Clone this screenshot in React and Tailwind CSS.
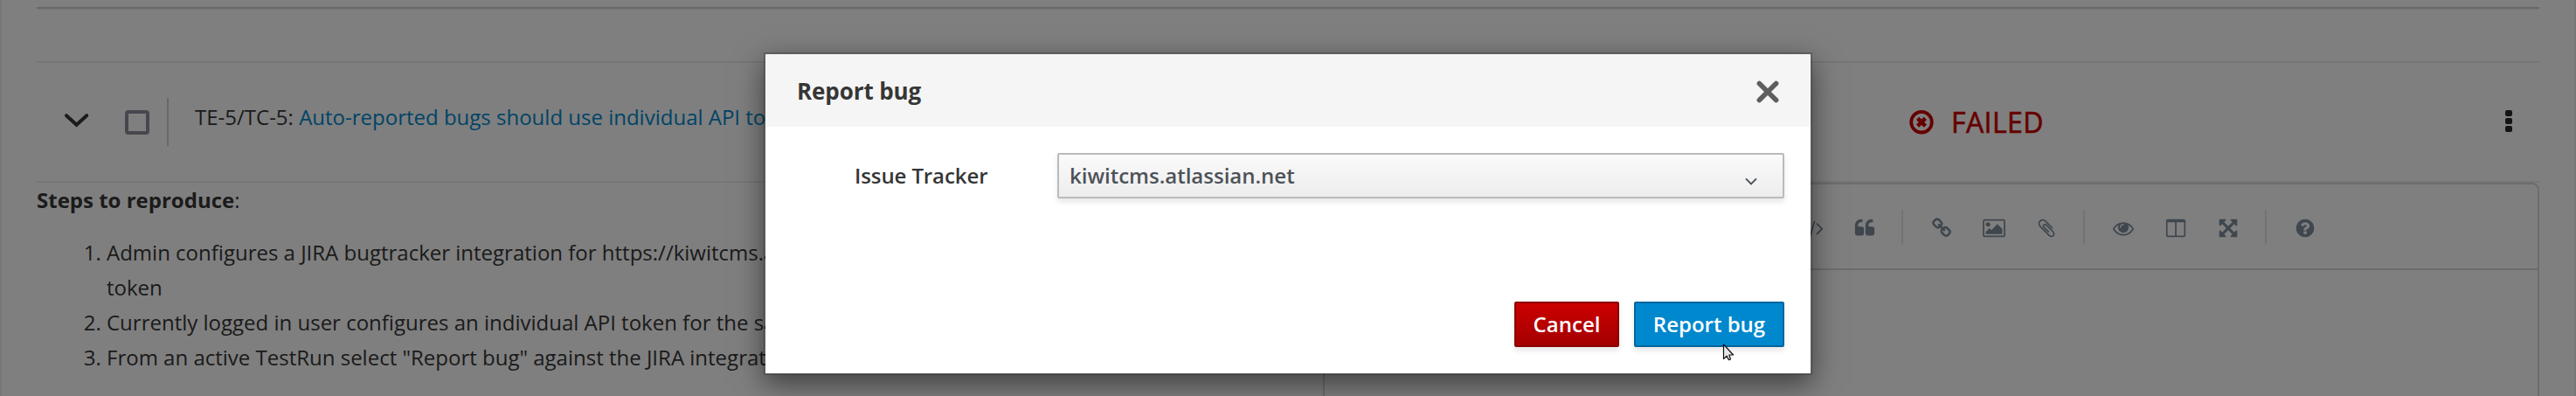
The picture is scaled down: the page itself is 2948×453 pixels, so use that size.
import React from 'react';

const GLYPHS = {
  code: 'M617 1399l-50 50q-10 10-23 10t-23-10l-466-466q-10-10-10-23t10-23l466-466q10-10 23-10t23 10l50 50q10 10 10 23t-10 23l-393 393 393 393q10 10 10 23t-10 23zm591-1067l-373 1291q-4 13-15.5 19.5t-23.5 2.5l-62-17q-13-4-19.5-15.5t-2.5-24.5l373-1291q4-13 15.5-19.5t23.5-2.5l62 17q13 4 19.5 15.5t2.5 24.5zm657 651l-466 466q-10 10-23 10t-23-10l-50-50q-10-10-10-23t10-23l393-393-393-393q-10-10-10-23t10-23l50-50q10-10 23-10t23 10l466 466q10 10 10 23t-10 23z',
  quote:
    'M832 960v384q0 80-56 136t-136 56h-384q-80 0-136-56t-56-136v-704q0-104 40.5-198.5t109.5-163.5 163.5-109.5 198.5-40.5h64q26 0 45 19t19 45v128q0 26-19 45t-45 19h-64q-106 0-181 75t-75 181v32q0 40 28 68t68 28h224q80 0 136 56t56 136zm896 0v384q0 80-56 136t-136 56h-384q-80 0-136-56t-56-136v-704q0-104 40.5-198.5t109.5-163.5 163.5-109.5 198.5-40.5h64q26 0 45 19t19 45v128q0 26-19 45t-45 19h-64q-106 0-181 75t-75 181v32q0 40 28 68t68 28h224q80 0 136 56t56 136z',
  link: 'M1520 1216q0-40-28-68l-208-208q-28-28-68-28-42 0-72 32 3 3 19 18.5t21.5 21.5 15 19 13 25.5 3.5 27.5q0 40-28 68t-68 28q-15 0-27.5-3.5t-25.5-13-19-15-21.5-21.5-18.5-19q-33 31-33 73 0 40 28 68l206 207q27 27 68 27 40 0 68-26l147-146q28-28 28-67zm-703-705q0-40-28-68l-206-207q-28-28-68-28-39 0-68 27l-147 146q-28 28-28 67 0 40 28 68l208 208q27 27 68 27 42 0 72-31-3-3-19-18.5t-21.5-21.5-15-19-13-25.5-3.5-27.5q0-40 28-68t68-28q15 0 27.5 3.5t25.5 13 19 15 21.5 21.5 18.5 19q33-31 33-73zm895 705q0 120-85 203l-147 146q-83 83-203 83-121 0-204-85l-206-207q-83-83-83-203 0-123 88-209l-88-88q-86 88-208 88-120 0-204-84l-208-208q-84-84-84-204t85-203l147-146q83-83 203-83 121 0 204 85l206 207q83 83 83 203 0 123-88 209l88 88q86-88 208-88 120 0 204 84l208 208q84 84 84 204z',
  image:
    'M576 576q0 80-56 136t-136 56-136-56-56-136 56-136 136-56 136 56 56 136zm1024 384v448h-1408v-192l320-320 160 160 512-512zm96-704h-1600q-13 0-22.5 9.5t-9.5 22.5v1216q0 13 9.5 22.5t22.5 9.5h1600q13 0 22.5-9.5t9.5-22.5v-1216q0-13-9.5-22.5t-22.5-9.5zm160 32v1216q0 66-47 113t-113 47h-1600q-66 0-113-47t-47-113v-1216q0-66 47-113t113-47h1600q66 0 113 47t47 113z',
  clip: 'M1596 1385q0 117-79 196t-196 79q-135 0-235-100l-777-776q-113-115-113-271 0-159 110-270t269-111q158 0 273 113l605 606q10 10 10 22 0 16-30.5 46.5t-46.5 30.5q-13 0-23-10l-606-607q-79-77-181-77-106 0-179 75t-73 181q0 105 76 181l776 777q63 63 145 63 64 0 106-42t42-106q0-82-63-145l-581-581q-26-24-60-24-29 0-48 19t-19 48q0 32 25 59l410 410q10 10 10 22 0 16-31 47t-47 31q-12 0-22-10l-410-410q-63-61-63-149 0-82 57-139t139-57q88 0 149 63l581 581q100 98 100 235z',
  eye: 'M1664 960q-152-236-381-353 61 104 61 225 0 185-131.5 316.5t-316.5 131.5-316.5-131.5-131.5-316.5q0-121 61-225-229 117-381 353 133 205 333.5 326.5t434.5 121.5 434.5-121.5 333.5-326.5zm-720-384q0-20-14-34t-34-14q-125 0-214.5 89.5t-89.5 214.5q0 20 14 34t34 14 34-14 14-34q0-86 61-147t147-61q20 0 34-14t14-34zm848 384q0 34-20 69-140 230-376.5 368.5t-499.5 138.5-499.5-139-376.5-368q-20-35-20-69t20-69q140-229 376.5-368t499.5-139 499.5 139 376.5 368q20 35 20 69z',
  columns:
    'M224 128h1344q66 0 113 47t47 113v1216q0 66-47 113t-113 47h-1344q-66 0-113-47t-47-113v-1216q0-66 47-113t113-47zM192 384v1120q0 32 32 32h608v-1152zM960 384v1152h608q32 0 32-32v-1120z',
  expand:
    'M1283 413l-355 355 355 355 144-144q29-31 70-14 39 17 39 59v448q0 26-19 45t-45 19h-448q-42 0-59-40-17-39 14-69l144-144-355-355-355 355 144 144q31 30 14 69-17 40-59 40h-448q-26 0-45-19t-19-45v-448q0-42 40-59 39-17 69 14l144 144 355-355-355-355-144 144q-19 19-45 19-12 0-24-5-40-17-40-59v-448q0-26 19-45t45-19h448q42 0 59 40 17 39-14 69l-144 144 355 355 355-355-144-144q-31-30-14-69 17-40 59-40h448q26 0 45 19t19 45v448q0 42-39 59-13 5-25 5-26 0-45-19z',
  help: 'M1024 1376v-192q0-14-9-23t-23-9h-192q-14 0-23 9t-9 23v192q0 14 9 23t23 9h192q14 0 23-9t9-23zm256-672q0-88-55.5-163t-138.5-116-170-41q-243 0-371 213-15 24 8 42l132 100q7 6 19 6 16 0 25-12 53-68 86-92 34-24 86-24 48 0 85.5 26t37.5 59q0 38-20 61t-68 45q-63 28-115.5 86.5t-52.5 125.5v36q0 14 9 23t23 9h192q14 0 23-9t9-23q0-19 21.5-49.5t54.5-49.5q32-18 49-28.5t46-35 44.5-48 28-60.5 12.5-81zm384 192q0 209-103 385.5t-279.5 279.5-385.5 103-385.5-103-279.5-279.5-103-385.5 103-385.5 279.5-279.5 385.5-103 385.5 103 279.5 279.5 103 385.5z',
};

const ORIGINS = { code: '64 0 1792 1792', expand: '-128 -128 1792 1792' };

function ToolButton({ name }) {
  return (
    <span className="flex h-[60px] w-[60px] items-center justify-center pt-[3px]">
      <svg
        className="h-6 w-6 overflow-visible fill-[#7f8c9b]"
        viewBox={ORIGINS[name] || '0 0 1792 1792'}
      >
        <path fillRule={name === 'columns' ? 'evenodd' : 'nonzero'} d={GLYPHS[name]} />
      </svg>
    </span>
  );
}

function Separator() {
  return <span className="mt-0.5 mr-[14px] ml-3 h-10 w-0.5 bg-[#e6e6e6]" />;
}

function ExecutionRow() {
  return (
    <div className="flex h-[139px] border-t-2 border-b-2 border-[#ededed]">
      <svg className="mt-[57px] ml-[31px] h-[18px] w-[30px]" viewBox="0 0 30 18">
        <path
          d="M3 3.2 L14.6 13.8 L26.2 3.2"
          fill="none"
          stroke="#363636"
          strokeWidth="4"
          strokeLinecap="round"
        />
      </svg>
      <span className="mt-[54px] ml-10 h-7 w-7 rounded-[4px] border-4 border-[#8f8f9d]" />
      <span className="mt-10 ml-5 h-[55px] w-0.5 bg-[#d1d1d1]" />
      <div className="mt-[42px] ml-[30px] w-[1962px] leading-10 whitespace-nowrap">
        TE-5/TC-5: <a className="text-[#0088ce]">Auto-reported bugs should use individual API token</a>
      </div>
      <svg className="mt-[54px] h-7 w-7" viewBox="0 0 28 28">
        <circle cx="14" cy="13.7" r="11.8" fill="none" stroke="#cc0000" strokeWidth="3.8" />
        <path
          d="M9.6 9.3 L18.4 18.1 M18.4 9.3 L9.6 18.1"
          fill="none"
          stroke="#cc0000"
          strokeWidth="4.6"
        />
      </svg>
      <div className="mt-12 ml-[20px] w-[634px] text-[32px] leading-10 tracking-[0.4px] text-[#cc0000] [-webkit-text-stroke:0.6px_#cc0000]">
        FAILED
      </div>
      <div className="mt-[54px] flex flex-col gap-0.5">
        <span className="h-[7px] w-2 rounded-[2px] bg-[#292929]" />
        <span className="h-[7px] w-2 rounded-[2px] bg-[#292929]" />
        <span className="h-[7px] w-2 rounded-[2px] bg-[#292929]" />
      </div>
    </div>
  );
}

function Steps() {
  return (
    <div className="w-[1472px] leading-10">
      <p>
        <strong className="font-bold">Steps to reproduce</strong>:
      </p>
      <ol className="mt-5 list-decimal pl-20">
        <li>
          Admin configures a JIRA bugtracker integration for https://kiwitcms.atlassian.net with an API
          <br />
          token
        </li>
        <li>Currently logged in user configures an individual API token for the same system</li>
        <li>From an active TestRun select "Report bug" against the JIRA integration</li>
      </ol>
    </div>
  );
}

function Editor() {
  return (
    <div className="h-[300px] flex-1 rounded-t-[8px] border-2 border-[#d9d9d9]">
      <div className="flex h-[98px] items-center justify-end border-b-2 border-[#d9d9d9] pr-[236px]">
        <ToolButton name="code" />
        <ToolButton name="quote" />
        <Separator />
        <ToolButton name="link" />
        <ToolButton name="image" />
        <ToolButton name="clip" />
        <Separator />
        <ToolButton name="eye" />
        <ToolButton name="columns" />
        <ToolButton name="expand" />
        <Separator />
        <ToolButton name="help" />
      </div>
    </div>
  );
}

function Modal() {
  return (
    <div className="absolute top-[60px] left-[874px] w-[1200px] border-2 border-black/20 bg-white bg-clip-padding shadow-[0_10px_30px_rgba(0,0,0,0.5)]">
      <div className="flex h-[83px] items-center justify-between bg-[#f5f5f5] pr-9 pl-9">
        <h4 className="text-[26px] leading-10 font-bold tracking-[-0.1px]">Report bug</h4>
        <svg className="mt-[3px] h-[26px] w-[26px]" viewBox="0 0 26 26">
          <path
            d="M3.4 3.4 L22.6 22.6 M22.6 3.4 L3.4 22.6"
            fill="none"
            stroke="#5e5e5e"
            strokeWidth="5.6"
            strokeLinecap="round"
          />
        </svg>
      </div>
      <div className="flex h-[282px] flex-col justify-between px-[30px] py-[30px]">
        <div className="flex items-center">
          <label className="w-[304px] pl-[72px] leading-10 font-semibold tracking-[-0.1px]">
            Issue Tracker
          </label>
          <div className="flex h-[52px] flex-1 items-center justify-between rounded-[2px] border-2 border-[#bbbbbb] bg-linear-to-b from-[#fafafa] to-[#ededed] pr-[28px] pl-3 font-semibold text-[#4d5258] shadow-[0_4px_6px_rgba(3,3,3,0.1)]">
            kiwitcms.atlassian.net
            <svg className="mt-[14px] h-[10px] w-4" viewBox="0 0 16 10">
              <path d="M2 1.4 L8 7.4 L14 1.4" fill="none" stroke="#4d5258" strokeWidth="2" />
            </svg>
          </div>
        </div>
        <div className="flex justify-end gap-[17px] font-semibold text-white">
          <button className="flex h-[52px] w-[120px] items-center justify-center rounded-[2px] border-2 border-[#8b0000] bg-linear-to-b from-[#cc0000] to-[#a30000] shadow-[0_4px_6px_rgba(3,3,3,0.1)]">
            Cancel
          </button>
          <button className="flex h-[52px] w-[172px] items-center justify-center rounded-[2px] border-2 border-[#00659c] bg-[#0088ce] shadow-[0_4px_6px_rgba(3,3,3,0.1)]">
            Report bug
          </button>
        </div>
      </div>
    </div>
  );
}

function Cursor() {
  return (
    <svg className="absolute top-[393px] left-[1971px] h-5 w-[14px]" viewBox="0 0 14 20">
      <path
        d="M1.5 1 V17.6 L5.1 14.2 L7.3 18.4 Q8.4 19 9.4 17.8 L7.9 13 H12.6 Z"
        fill="#e8e8e8"
        stroke="#111111"
        strokeWidth="1.2"
        strokeLinejoin="round"
      />
    </svg>
  );
}

export default function App() {
  return (
    <div className="relative h-[453px] w-[2948px] overflow-hidden bg-white font-['Open_Sans',sans-serif] text-[24px] text-[#363636]">
      <div className="h-full border-x-2 border-[#ededed] px-10 pt-2">
        <div className="h-[62px] border-t-2 border-[#d1d1d1]">
          <div className="h-0.5 bg-[#f5f5f5]" />
        </div>
        <ExecutionRow />
        <div className="flex">
          <Steps />
          <Editor />
        </div>
      </div>
      <div className="absolute inset-0 bg-black/50" />
      <Modal />
      <Cursor />
    </div>
  );
}
